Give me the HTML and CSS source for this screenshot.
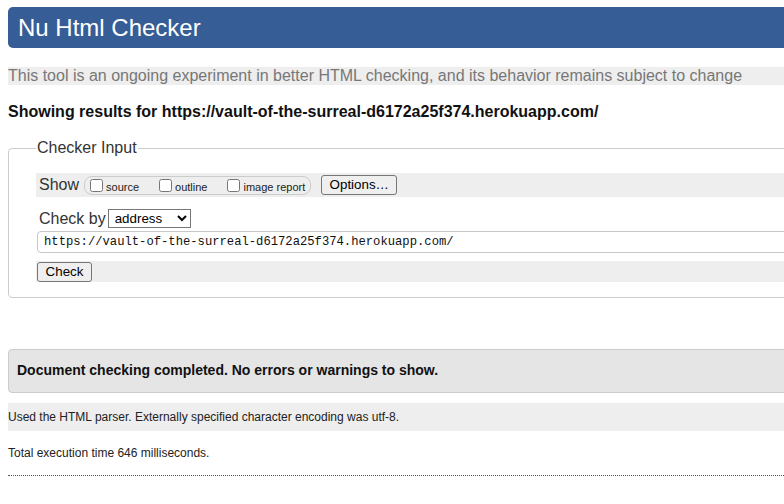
FILE: index.html
```html
<!DOCTYPE html>
<html lang="en">
<head>
<meta charset="utf-8">
<title>Nu Html Checker</title>
<link rel="stylesheet" href="styles.css">
</head>
<body>
<div class="page">
  <h1 class="title">Nu Html Checker</h1>
  <p class="about">This tool is an ongoing experiment in better HTML checking, and its behavior remains subject to change</p>
  <p class="showing">Showing results for https://vault-of-the-surreal-d6172a25f374.herokuapp.com/</p>
  <form class="checker">
    <fieldset class="input-set">
      <legend class="legend">Checker Input</legend>
      <div class="row row-show">
        <span class="row-label">Show</span>
        <span class="opts">
          <label class="opt"><input type="checkbox" class="cb"><span>source</span></label>
          <label class="opt"><input type="checkbox" class="cb"><span>outline</span></label>
          <label class="opt opt-last"><input type="checkbox" class="cb"><span>image report</span></label>
        </span>
        <button type="button" class="btn btn-options">Options…</button>
      </div>
      <div class="row row-checkby">
        <span class="row-label">Check by</span>
        <select class="sel"><option>address</option></select>
      </div>
      <div class="row row-url">
        <input type="text" class="url" value="https://vault-of-the-surreal-d6172a25f374.herokuapp.com/">
      </div>
      <div class="row row-submit">
        <button type="button" class="btn btn-check">Check</button>
      </div>
    </fieldset>
  </form>
  <div class="result">Document checking completed. No errors or warnings to show.</div>
  <p class="details details-band">Used the HTML parser. Externally specified character encoding was utf-8.</p>
  <p class="details">Total execution time 646 milliseconds.</p>
  <div class="sep"></div>
</div>
</body>
</html>
```
FILE: styles.css
```css
html {
  overflow: hidden;
  background: #fff;
}
body {
  margin: 0;
  font-family: "Liberation Sans", Arial, sans-serif;
  color: #222;
}
.page {
  width: 1100px;
  padding: 7px 0 0 8px;
}
.title {
  margin: 0;
  height: 41px;
  line-height: 41px;
  padding: 0 10px;
  font-size: 24px;
  font-weight: normal;
  color: #fff;
  background: #365d95;
  border-radius: 5px;
}
.about {
  margin: 19px 0 0;
  font-size: 16px;
  line-height: 18px;
  color: #777;
  background: #eee;
}
.showing {
  margin: 17px 0 0;
  font-size: 16px;
  line-height: 19px;
  font-weight: bold;
  color: #111;
}
.checker {
  margin: 18px 0 0;
}
.input-set {
  margin: 0;
  padding: 16px 0 15px 27px;
  border: 1px solid #ccc;
  border-radius: 4px;
  min-width: 0;
}
.legend {
  padding: 0 1px;
  font-size: 16px;
  line-height: 18px;
  color: #333;
}
.row {
  display: flex;
  align-items: center;
}
.row-label {
  font-size: 16px;
  color: #333;
}
.row-show {
  height: 24px;
  padding-left: 3px;
  background: #eee;
}
.opts {
  display: flex;
  align-items: center;
  height: 17px;
  margin-left: 5px;
  padding: 0 5px 0 1px;
  border: 1px solid #ccc;
  border-radius: 8px;
}
.opt {
  display: flex;
  align-items: center;
  font-size: 11px;
  color: #222;
  margin-right: 16px;
}
.opt span {
  padding-top: 3px;
}
.opt-last {
  margin-right: 0;
}
.cb {
  width: 13px;
  height: 13px;
  margin: 0 3px 0 4px;
}
.btn {
  font-family: "Liberation Sans", Arial, sans-serif;
  font-size: 13.33px;
  color: #000;
  background: #efefef;
  border: 1px solid #767676;
  border-radius: 3px;
  height: 20px;
  padding: 0 7px;
  line-height: 18px;
}
.btn-options {
  margin-left: 10px;
  width: 76px;
}
.row-checkby {
  margin-top: 12px;
  height: 19px;
  padding-left: 3px;
}
.sel {
  margin-left: 2px;
  width: 83px;
  height: 19px;
  font-family: "Liberation Sans", Arial, sans-serif;
  font-size: 13.33px;
  color: #000;
  background: #fff;
  border: 1px solid #767676;
  border-radius: 0;
  padding: 0 0 0 2px;
}
.row-url {
  margin-top: 3px;
}
.url {
  box-sizing: border-box;
  margin-left: 1px;
  width: 1000px;
  height: 22px;
  padding: 0 6px;
  border: 1px solid #c8c8c8;
  border-radius: 4px;
  font-family: "Liberation Mono", "DejaVu Sans Mono", monospace;
  font-size: 12.2px;
  color: #111;
  background: #fff;
}
.row-submit {
  margin-top: 8px;
  height: 21px;
  background: #eee;
}
.btn-check {
  margin-left: 1px;
  width: 55px;
  height: 20px;
}
.result {
  margin-top: 51px;
  padding: 12px 8px 13px;
  line-height: 17px;
  font-size: 14px;
  font-weight: bold;
  color: #111;
  background: #e5e5e5;
  border: 1px solid #ccc;
  border-radius: 4px;
}
.details {
  margin: 15px 0 0;
  font-size: 12px;
  line-height: 14px;
  color: #222;
}
.details-band {
  margin-top: 10px;
  padding: 7px 0;
  background: #eee;
}
.sep {
  margin-top: 15px;
  border-top: 1px dotted #555;
}
```
